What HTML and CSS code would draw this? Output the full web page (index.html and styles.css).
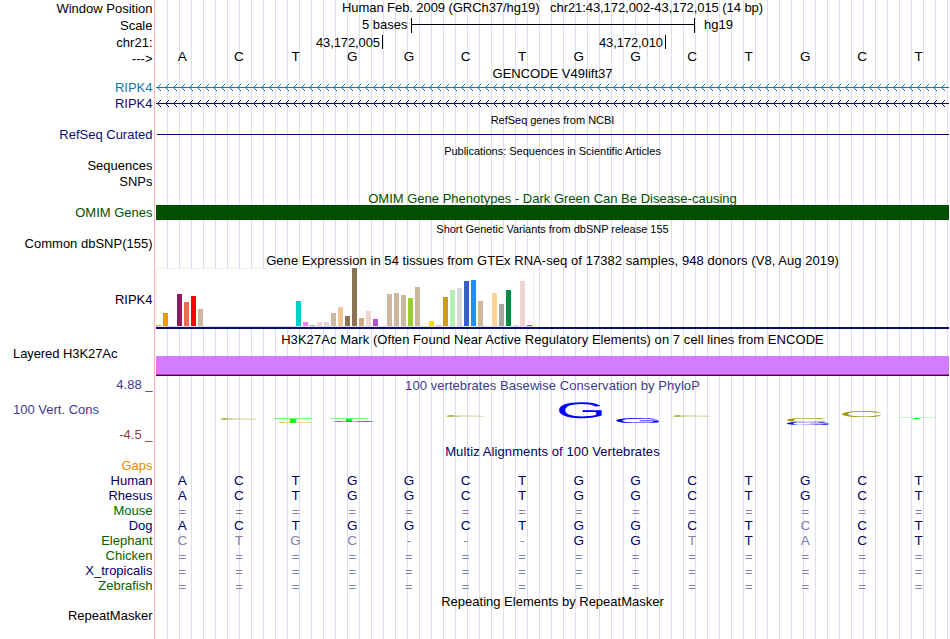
FILE: index.html
```html
<!DOCTYPE html>
<html lang="en">
  <head>
    <meta charset="UTF-8" />
    <title>Human chr21:43,172,002-43,172,015 UCSC Genome Browser v49</title>
    <link rel="stylesheet" href="styles.css">
  </head>
  <body>
    <div class="browser">
      <div class="row ruler">
        <div class="label">Window Position</div>
        <div class="track title t-position">Human Feb. 2009 (GRCh37/hg19)   chr21:43,172,002-43,172,015 (14 bp)</div>
      </div>
      <div class="row ruler">
        <div class="label">Scale</div>
        <div class="track scale">
          <span class="scale-size">5 bases</span>
          <span class="scale-bar"></span>
          <span class="scale-db">hg19</span>
        </div>
      </div>
      <div class="row coords">
        <div class="label">chr21:</div>
        <div class="track ticks">
          <span class="tick">43,172,005</span>
          <span class="tick">43,172,010</span>
        </div>
      </div>
      <div class="row sequence">
        <div class="label">---&gt;</div>
        <div class="track bases" data-seq="ACTGGCTGGCTGCT"></div>
      </div>

      <div class="row gencode-title">
        <div class="label"></div>
        <div class="track title t-gencode">GENCODE V49lift37</div>
      </div>
      <div class="row item gencode">
        <div class="label">RIPK4</div>
        <div class="track"><svg class="intron" width="793" height="7"></svg></div>
      </div>
      <div class="row item navy">
        <div class="label">RIPK4</div>
        <div class="track"><svg class="intron" width="793" height="7"></svg></div>
      </div>

      <div class="row heading">
        <div class="label"></div>
        <div class="track title small">RefSeq genes from NCBI</div>
      </div>
      <div class="row item navy">
        <div class="label">RefSeq Curated</div>
        <div class="track"><div class="line"></div></div>
      </div>

      <div class="row heading">
        <div class="label"></div>
        <div class="track title small">Publications: Sequences in Scientific Articles</div>
      </div>
      <div class="row item">
        <div class="label">Sequences</div>
      </div>
      <div class="row item">
        <div class="label">SNPs</div>
      </div>

      <div class="row heading omim">
        <div class="label"></div>
        <div class="track title t-omim">OMIM Gene Phenotypes - Dark Green Can Be Disease-causing</div>
      </div>
      <div class="row item omim">
        <div class="label">OMIM Genes</div>
        <div class="track"><div class="omim-bar"></div></div>
      </div>

      <div class="row heading">
        <div class="label"></div>
        <div class="track title small">Short Genetic Variants from dbSNP release 155</div>
      </div>
      <div class="row item">
        <div class="label">Common dbSNP(155)</div>
      </div>

      <div class="row gtex-title">
        <div class="label"></div>
        <div class="track title t-gtex">Gene Expression in 54 tissues from GTEx RNA-seq of 17382 samples, 948 donors (V8, Aug 2019)</div>
      </div>
      <div class="row gtex">
        <div class="label">RIPK4</div>
        <div class="track"><div class="gtex-graph" id="gtex"></div></div>
      </div>

      <div class="row h3k-title">
        <div class="label"></div>
        <div class="track title t-h3k">H3K27Ac Mark (Often Found Near Active Regulatory Elements) on 7 cell lines from ENCODE</div>
      </div>
      <div class="row h3k">
        <div class="label left">Layered H3K27Ac</div>
        <div class="track"><div class="h3k-bar"></div></div>
      </div>

      <div class="row cons-title cons">
        <div class="label">4.88 _</div>
        <div class="track title t-cons">100 vertebrates Basewise Conservation by PhyloP</div>
      </div>
      <div class="row cons-graph cons">
        <div class="label left">100 Vert. Cons</div>
        <div class="track"><svg class="logo" id="logo" width="793" height="36"></svg></div>
      </div>
      <div class="row cons-min">
        <div class="label">-4.5 _</div>
      </div>

      <div class="row multiz-title">
        <div class="label"></div>
        <div class="track title t-multiz">Multiz Alignments of 100 Vertebrates</div>
      </div>
      <div class="row species gaps">
        <div class="label">Gaps</div>
      </div>
      <div class="row species">
        <div class="label">Human</div>
        <div class="track bases" data-seq="ACTGGCTGGCTGCT"></div>
      </div>
      <div class="row species">
        <div class="label">Rhesus</div>
        <div class="track bases" data-seq="ACTGGCTGGCTGCT"></div>
      </div>
      <div class="row species green">
        <div class="label">Mouse</div>
        <div class="track bases unaligned" data-seq="=============="></div>
      </div>
      <div class="row species">
        <div class="label">Dog</div>
        <div class="track bases" data-seq="ACTGGCTGGCTCCT"></div>
      </div>
      <div class="row species green">
        <div class="label">Elephant</div>
        <div class="track bases" data-seq="CTGC---GGTTACT"></div>
      </div>
      <div class="row species green">
        <div class="label">Chicken</div>
        <div class="track bases unaligned" data-seq="=============="></div>
      </div>
      <div class="row species">
        <div class="label">X_tropicalis</div>
        <div class="track bases unaligned" data-seq="=============="></div>
      </div>
      <div class="row species green">
        <div class="label">Zebrafish</div>
        <div class="track bases unaligned" data-seq="=============="></div>
      </div>

      <div class="row rmsk-title">
        <div class="label"></div>
        <div class="track title t-rmsk">Repeating Elements by RepeatMasker</div>
      </div>
      <div class="row rmsk">
        <div class="label">RepeatMasker</div>
      </div>
    </div>

    <script src="tracks.js"></script>
  </body>
</html>
```

FILE: styles.css
```css
* {
  margin: 0;
  padding: 0;
  box-sizing: border-box;
}

body {
  background: #fff;
  font-family: "Liberation Sans", Arial, Helvetica, sans-serif;
  font-size: 13px;
  line-height: 15px;
  color: #000;
  overflow: hidden;
}

.browser {
  width: 949px;
  height: 639px;
  /* red separator after the labels, then a guide line every 12px */
  background:
    linear-gradient(#ffb4b4, #ffb4b4) 154px 0 / 1px 100% no-repeat,
    repeating-linear-gradient(
      to right,
      transparent 0 11px,
      #dcdcff 11px 12px
    ) 156px 0 / 793px 100% no-repeat;
}

.row {
  display: flex;
  height: 15px;
}

.label {
  flex: none;
  width: 156px;
  padding: 1px 3.5px 0 0;
  text-align: right;
  white-space: pre;
}

.label.left {
  padding-left: 13px;
  text-align: left;
}

.track {
  flex: none;
  width: 793px;
}

.title {
  text-align: center;
  white-space: pre;
}

.small {
  font-size: 11px;
  padding-top: 2px;
  letter-spacing: -0.02px;
}

.t-position {
  letter-spacing: -0.07px;
}

.t-gtex,
.t-h3k,
.t-cons {
  letter-spacing: 0.06px;
}

.t-multiz {
  letter-spacing: 0.1px;
}

/* ruler */
.ruler {
  height: 17px;
}

.scale {
  display: flex;
}

.scale-size {
  width: 255px;
  padding-right: 3.5px;
  text-align: right;
}

.scale-bar {
  width: 284px;
  height: 15px;
  margin-top: 1px;
  border: solid #000;
  border-width: 0 1px;
  background: linear-gradient(#000, #000) 0 6px / 100% 1px no-repeat;
}

.scale-db {
  padding-left: 9px;
}

.ticks {
  display: flex;
}

.tick {
  width: 283px;
  height: 14px;
  margin-top: 1px;
  padding-right: 2px;
  border-right: 1px solid #000;
  letter-spacing: -0.1px;
  text-align: right;
}

.tick:first-child {
  width: 227px;
}

.sequence {
  height: 17px;
}

.sequence .label {
  padding-top: 2px;
}

.bases {
  display: flex;
  margin-left: -2px;
  font-size: 13.5px;
}

.bases span {
  flex: 1;
  text-align: center;
}

.unaligned {
  padding-top: 1px;
  font-size: 13px;
}

/* gene tracks */
.gencode-title {
  height: 13px;
}

.item {
  height: 16px;
}

.gencode {
  color: #0c78b4;
}

.navy {
  color: #0c0c78;
}

.intron {
  display: block;
  margin-top: 5px;
}

.intron path {
  fill: none;
  stroke: currentColor;
  shape-rendering: crispEdges;
}

.line {
  height: 1px;
  margin: 8px 0 0 1px;
  background: #0c0c78;
}

.omim {
  color: #005000;
}

.heading .t-omim {
  padding-top: 2px;
}

.omim-bar {
  height: 15px;
  margin-top: 1px;
  background: #005000;
}

/* expression graph */
.gtex-title {
  height: 17px;
}

.gtex-title .title {
  padding-top: 2px;
}

.gtex {
  height: 61px;
}

.gtex .label {
  padding-top: 24px;
}

.gtex .track {
  border-bottom: 2px solid #0c0c78;
}

.gtex-graph {
  display: flex;
  align-items: flex-end;
  gap: 2px;
  width: 378px;
  height: 59px;
  background: #fff;
  box-shadow: inset 1px 1px #f0f0f0, inset -1px 0 #f0f0f0;
  border-bottom: 1px solid #dcdcdc;
}

.gtex-graph span {
  width: 5px;
}

/* H3K27Ac */
.h3k-title {
  height: 17px;
}

.h3k-title .title {
  padding-top: 3px;
}

.h3k {
  height: 30px;
}

.h3k .label {
  padding-top: 0;
  letter-spacing: -0.08px;
}

.h3k-bar {
  height: 20px;
  margin-top: 10px;
  background: #d27dff;
  border-bottom: 1px solid #320032;
  box-shadow: inset 0 -1px #c832c8;
}

/* conservation */
.cons {
  color: #3c3c8c;
}

.cons-title .title {
  padding-top: 2px;
}

.cons-graph {
  height: 36px;
}

.cons-graph .label {
  padding-top: 11px;
}

.cons-min {
  height: 16px;
  color: #8c3c3c;
}

.cons-min .label {
  padding-top: 0;
}

.logo {
  display: block;
}

.logo text {
  font-size: 100px;
  text-rendering: geometricPrecision;
}

/* alignments */
.multiz-title .title {
  padding-top: 1px;
  color: #000064;
}

.species {
  color: #000064;
}

.species .label {
  padding-top: 0;
}

.species.green .label {
  color: #006400;
}

.species.gaps {
  color: #e68c00;
}

.species .diff {
  color: #8080b2;
}

.rmsk-title {
  height: 14px;
}

.rmsk-title .title {
  padding-top: 1px;
}

.rmsk {
  height: 32px;
}
```

FILE: tracks.js
```js
// [tissue index, height, color]
const tissues = [
  [0, 1, "#ffa54f"], [1, 13, "#ee9a00"], [3, 32, "#8b1c62"],
  [4, 24, "#ee6a50"], [5, 30, "#ff0000"], [6, 17, "#cdb79e"],
  [20, 25, "#00cdcd"], [21, 4, "#ee82ee"], [22, 1, "#9ac0cd"],
  [23, 4, "#eed5d2"], [24, 4, "#eed5d2"], [25, 13, "#cdb79e"],
  [26, 19, "#eec591"], [27, 10, "#8b7355"], [28, 58, "#8b7355"],
  [29, 8, "#cdaa7d"], [30, 15, "#eed5d2"], [31, 7, "#b452cd"],
  [33, 32, "#cdb79e"], [34, 33, "#cdb79e"], [35, 31, "#cdb79e"],
  [36, 28, "#9acd32"], [37, 39, "#cdb79e"], [39, 5, "#ffd700"],
  [40, 1, "#ffb6c1"], [41, 29, "#cd9b1d"], [42, 36, "#b4eeb4"],
  [43, 38, "#d9d9d9"], [44, 45, "#3a5fcd"], [45, 46, "#1e90ff"],
  [46, 25, "#cdb79e"], [48, 33, "#ffd39b"], [49, 22, "#a6a6a6"],
  [50, 36, "#008b45"], [51, 1, "#eed5d2"], [52, 45, "#eed5d2"],
  [53, 1, "#ff00ff"],
];

const gtex = document.getElementById("gtex");
for (let i = 0; i < 54; i++) {
  const bar = document.createElement("span");
  const tissue = tissues.find((t) => t[0] === i);
  if (tissue) {
    bar.style.height = tissue[1] + "px";
    bar.style.background = tissue[2];
  }
  gtex.appendChild(bar);
}

// Bases, anything that differs from human is dimmed
const human = "ACTGGCTGGCTGCT";
document.querySelectorAll(".bases").forEach((row) => {
  [...row.dataset.seq].forEach((base, i) => {
    const cell = document.createElement("span");
    cell.textContent = base;
    if (base !== human[i]) cell.className = "diff";
    row.appendChild(cell);
  });
});

// Minus strand arrows, one pixel per step away from the line
const svgNS = "http://www.w3.org/2000/svg";
document.querySelectorAll(".intron").forEach((svg) => {
  let d = "M0 3.5H793";
  for (let x = 1; x < 790; x += 8) {
    for (let step = 1; step <= 3; step++) {
      d += `M${x + step} ${3.5 - step}h1M${x + step} ${3.5 + step}h1`;
    }
  }
  const path = document.createElementNS(svgNS, "path");
  path.setAttribute("d", d);
  svg.appendChild(path);
});

// Conservation logo: [letter, left, top, width, height]
const logo = [
  ["C", 64, 27, 39, 2],
  ["T", 118, 27, 38, 4.5], ["C", 121, 31, 38, 1],
  ["T", 174, 27, 38, 3.5], ["G", 177, 30.2, 42, 1],
  ["C", 290, 24, 40, 2],
  ["G", 403, 11, 43, 16],
  ["G", 460, 27, 43, 5],
  ["C", 517, 24, 39, 2],
  ["C", 631, 27, 40, 4], ["G", 631, 30.8, 42, 3.2],
  ["C", 686, 20, 40, 6],
  ["T", 742, 27, 37, 1.2],
];

// ink box of each letter at 100px: x offset, width, height, descent
const glyphs = {
  C: { x: 5, w: 64, h: 71, d: 1, color: "#a0a000" },
  G: { x: 5, w: 66, h: 71, d: 1, color: "#0000ff" },
  T: { x: 2.1, w: 57, h: 69, d: 0, color: "#00ff00" },
};

const logoSvg = document.getElementById("logo");
logo.forEach(([letter, left, top, width, height]) => {
  const g = glyphs[letter];
  const sx = width / g.w;
  const sy = height / g.h;
  const text = document.createElementNS(svgNS, "text");
  text.textContent = letter;
  text.setAttribute("fill", g.color);
  text.setAttribute(
    "transform",
    `translate(${left - g.x * sx} ${top + height - g.d * sy}) scale(${sx} ${sy})`
  );
  logoSvg.appendChild(text);
});
```
